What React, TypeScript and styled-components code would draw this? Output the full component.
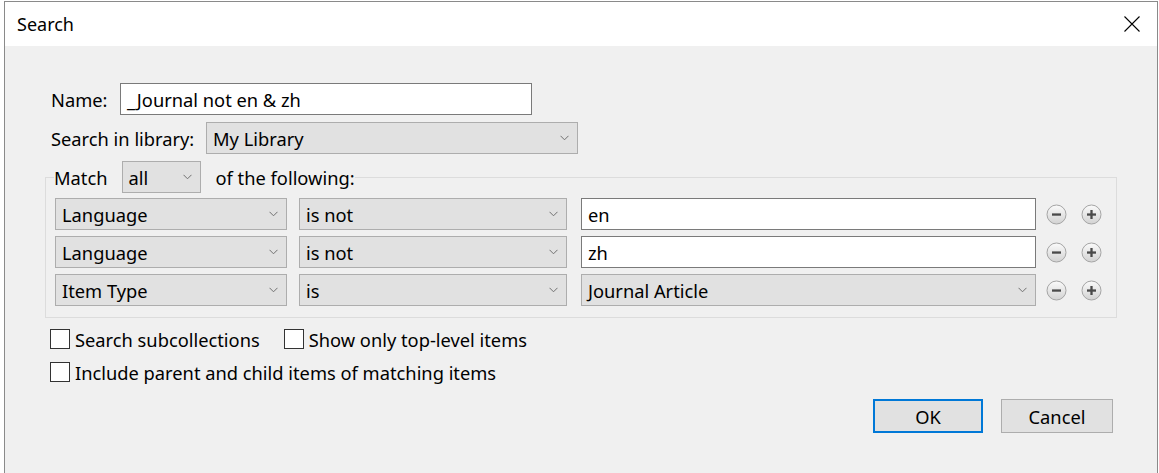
import React from 'react'
import styled, { createGlobalStyle } from 'styled-components'

const GlobalStyle = createGlobalStyle`
  html, body {
    margin: 0;
    padding: 0;
    background: #ffffff;
    overflow: hidden;
  }
  body {
    font-family: "Noto Sans", "Open Sans", sans-serif;
    color: #000;
  }
`

const Dialog = styled.div`
  box-sizing: border-box;
  margin: 1px 0 0 4px;
  width: 1154px;
  height: 472px;
  border: 1px solid #8a8a8a;
  border-bottom: none;
  display: flex;
  flex-direction: column;
  background: #f0f0f0;
`

const TitleBar = styled.div`
  height: 44px;
  background: #fff;
  display: flex;
  align-items: center;
  justify-content: space-between;
  padding: 0 17px 0 12px;
  font-size: 18px;
`

const Body = styled.div`
  flex: 1;
  padding: 37px 39px 0 40px;
  font-size: 18.3px;
`

const FieldRow = styled.div`
  display: flex;
  align-items: center;
  padding-left: 6px;
  margin-bottom: 7px;
`

const Label = styled.span<{ $width: number }>`
  width: ${p => p.$width}px;
  white-space: nowrap;
`

const TextInput = styled.div<{ $width: number }>`
  box-sizing: border-box;
  width: ${p => p.$width}px;
  height: 32px;
  border: 1px solid #7a7a7a;
  background: #fff;
  display: flex;
  align-items: center;
  padding-left: 6px;
`

const Select = styled.div<{ $width: number }>`
  box-sizing: border-box;
  width: ${p => p.$width}px;
  height: 32px;
  border: 1px solid #adadad;
  background: #e1e1e1;
  display: flex;
  align-items: center;
  justify-content: space-between;
  padding: 0 8px 0 6px;
`

const Chevron = () => (
  <svg width="9" height="6" viewBox="0 0 9 6">
    <polyline points="0.5,0.8 4.5,4.8 8.5,0.8" fill="none" stroke="#707070" strokeWidth="1" />
  </svg>
)

const Group = styled.fieldset`
  box-sizing: border-box;
  width: 1072px;
  margin: 0;
  padding: 5px 13px 11px 9px;
  border: 1px solid #dcdcdc;
`

const Legend = styled.legend`
  display: flex;
  align-items: center;
  padding: 0;
  margin-left: -1px;
`

const LegendSelect = styled(Select)`
  margin: 0 15px 0 14px;
`

const CondRows = styled.div`
  display: flex;
  flex-direction: column;
  gap: 6px;
`

const CondRow = styled.div`
  display: flex;
  align-items: center;
  gap: 12px;

  & > :nth-child(3) {
    margin-left: 2px;
  }
`

const RoundButton = styled.div<{ $first?: boolean }>`
  width: 21px;
  height: 21px;
  margin-left: ${p => (p.$first ? '-2px' : '2px')};
  display: flex;
`

const IconButton = ({ kind, first }: { kind: 'minus' | 'plus'; first?: boolean }) => (
  <RoundButton $first={first}>
    <svg width="21" height="21" viewBox="0 0 21 21">
      <defs>
        <linearGradient id={`g-${kind}`} x1="0" y1="0" x2="0" y2="1">
          <stop offset="0" stopColor="#fbfbfb" />
          <stop offset="1" stopColor="#d2d2d2" />
        </linearGradient>
      </defs>
      <circle cx="10.5" cy="10.5" r="9.5" fill={`url(#g-${kind})`} stroke="#a5a5a5" strokeWidth="1" />
      <rect x="6" y="9.4" width="9" height="2.3" fill="#4a4a4a" />
      {kind === 'plus' && <rect x="9.35" y="6" width="2.3" height="9" fill="#4a4a4a" />}
    </svg>
  </RoundButton>
)

const CheckRow = styled.div<{ $top: number }>`
  display: flex;
  align-items: center;
  padding-left: 5px;
  height: 20px;
  margin-top: ${p => p.$top}px;
`

const Check = styled.label`
  display: flex;
  align-items: center;
  gap: 5px;
  margin-right: 24px;
  white-space: nowrap;
`

const Box = styled.span`
  box-sizing: border-box;
  width: 20px;
  height: 20px;
  border: 1px solid #333;
  background: #fff;
`

const Buttons = styled.div`
  display: flex;
  justify-content: flex-end;
  gap: 18px;
  margin-top: 17px;
  padding-right: 5px;
`

const Button = styled.div<{ $primary?: boolean }>`
  box-sizing: border-box;
  width: ${p => (p.$primary ? 110 : 112)}px;
  height: 34px;
  background: #e1e1e1;
  border: ${p => (p.$primary ? '2px solid #0078d7' : '1px solid #adadad')};
  display: flex;
  align-items: center;
  justify-content: center;
`

const CloseIcon = () => (
  <svg width="16" height="16" viewBox="0 0 16 16">
    <path d="M0.5 0.5 L15.5 15.5 M15.5 0.5 L0.5 15.5" stroke="#000" strokeWidth="1.1" />
  </svg>
)

const conditions = [
  { field: 'Language', op: 'is not', value: 'en', pick: false },
  { field: 'Language', op: 'is not', value: 'zh', pick: false },
  { field: 'Item Type', op: 'is', value: 'Journal Article', pick: true },
]

export default function App() {
  return (
    <>
      <GlobalStyle />
      <Dialog>
        <TitleBar>
          <span>Search</span>
          <CloseIcon />
        </TitleBar>
        <Body>
          <FieldRow>
            <Label $width={69}>Name:</Label>
            <TextInput $width={412}>_Journal not en &amp; zh</TextInput>
          </FieldRow>
          <FieldRow>
            <Label $width={155}>Search in library:</Label>
            <Select $width={372}>
              My Library
              <Chevron />
            </Select>
          </FieldRow>
          <Group>
            <Legend>
              <span>Match</span>
              <LegendSelect $width={79}>
                all
                <Chevron />
              </LegendSelect>
              <span>of the following:</span>
            </Legend>
            <CondRows>
              {conditions.map((c, i) => (
                <CondRow key={i}>
                  <Select $width={232}>
                    {c.field}
                    <Chevron />
                  </Select>
                  <Select $width={268}>
                    {c.op}
                    <Chevron />
                  </Select>
                  {c.pick ? (
                    <Select $width={455}>
                      {c.value}
                      <Chevron />
                    </Select>
                  ) : (
                    <TextInput $width={455}>{c.value}</TextInput>
                  )}
                  <IconButton kind="minus" first />
                  <IconButton kind="plus" />
                </CondRow>
              ))}
            </CondRows>
          </Group>
          <CheckRow $top={11}>
            <Check>
              <Box />
              Search subcollections
            </Check>
            <Check>
              <Box />
              Show only top-level items
            </Check>
          </CheckRow>
          <CheckRow $top={13}>
            <Check>
              <Box />
              Include parent and child items of matching items
            </Check>
          </CheckRow>
          <Buttons>
            <Button $primary>OK</Button>
            <Button>Cancel</Button>
          </Buttons>
        </Body>
      </Dialog>
    </>
  )
}
